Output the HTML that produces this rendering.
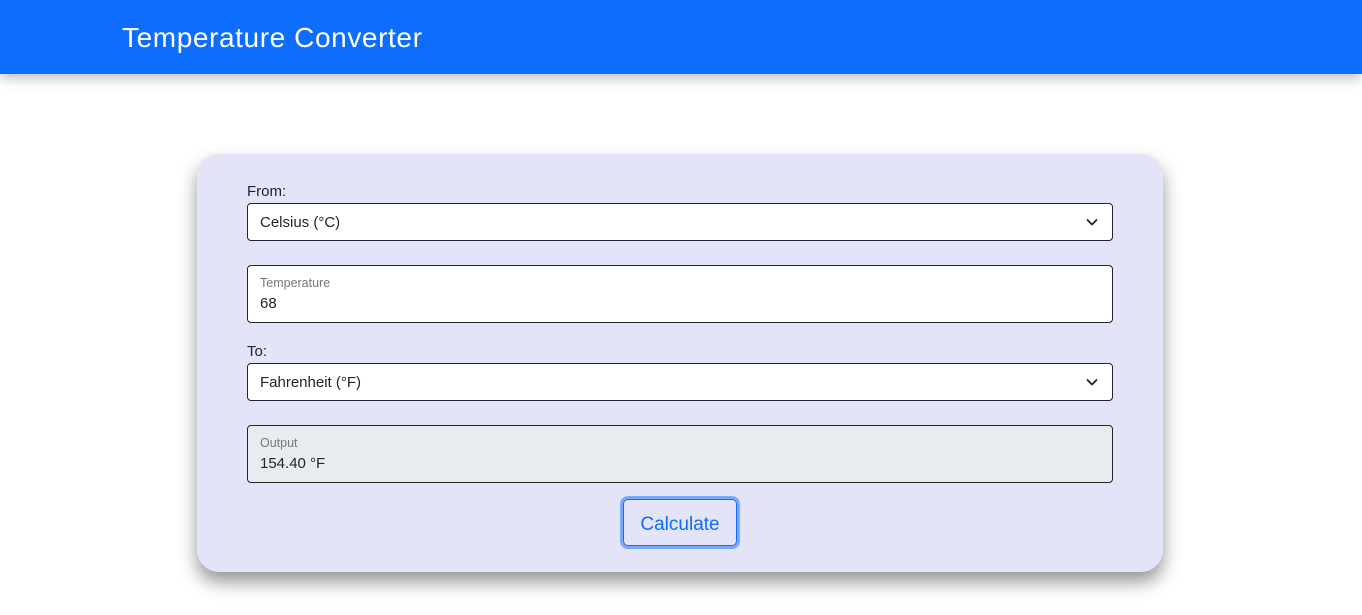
<!DOCTYPE html>
<html><head><meta charset="utf-8"><style>
*{box-sizing:border-box;margin:0;padding:0}
body{width:1362px;height:615px;background:#fff;font-family:"Liberation Sans",sans-serif;color:#212529;position:relative;overflow:hidden}
.nav{position:absolute;left:0;top:0;width:1362px;height:74px;background:#0d6efd;box-shadow:0 4px 12px rgba(0,0,0,.25)}
.nav span{position:absolute;left:122px;top:22px;color:#fff;font-size:28px;letter-spacing:0.6px}
.card{position:absolute;left:197px;top:154px;width:966px;height:418px;background:#e4e4f8;border-radius:22px;box-shadow:0 10px 18px rgba(0,0,0,.42)}
.lbl{position:absolute;left:50px;font-size:15px}
.f{position:absolute;left:50px;width:866px;background:#fff;border:1px solid #212529;border-radius:4px}
.sel{height:38px}
.sel span{position:absolute;left:12px;top:10px;font-size:15px}
.sel svg{position:absolute;right:14px;top:13px}
.fl{height:58px}
.fl .s{position:absolute;left:12px;top:10px;font-size:12.5px;color:#777}
.fl .v{position:absolute;left:12px;top:29px;font-size:15px}
.btn{position:absolute;left:423px;top:342px;width:120px;height:53px;border:3px solid #7aa9fb;border-radius:8px}
.btn div{position:absolute;left:0;top:0;right:0;bottom:0;border:1.5px solid #0d6efd;border-radius:5px;color:#0d6efd;font-size:19px;text-align:center;line-height:50px}
</style></head><body>
<div class="nav"><span>Temperature Converter</span></div>
<div class="card">
<div class="lbl" style="top:29px">From:</div>
<div class="f sel" style="top:49px"><span>Celsius (°C)</span><svg width="12" height="10" viewBox="0 0 12 10"><path d="M1 2.5l5 5 5-5" fill="none" stroke="#212529" stroke-width="1.8"/></svg></div>
<div class="f fl" style="top:111px"><div class="s">Temperature</div><div class="v">68</div></div>
<div class="lbl" style="top:189px">To:</div>
<div class="f sel" style="top:209px"><span>Fahrenheit (°F)</span><svg width="12" height="10" viewBox="0 0 12 10"><path d="M1 2.5l5 5 5-5" fill="none" stroke="#212529" stroke-width="1.8"/></svg></div>
<div class="f fl" style="top:271px;background:#e9ecef"><div class="s">Output</div><div class="v">154.40 °F</div></div>
<div class="btn"><div>Calculate</div></div>
</div>
</body></html>
